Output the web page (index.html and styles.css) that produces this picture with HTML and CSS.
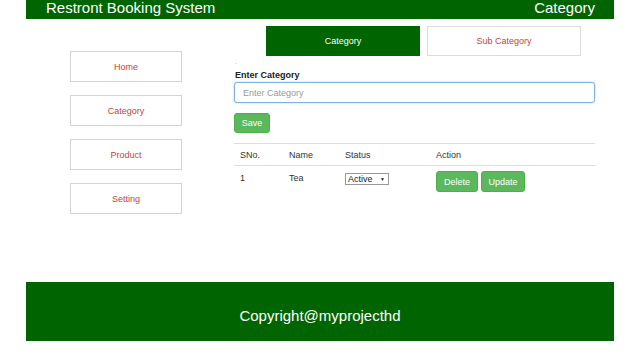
FILE: index.html
```html
<!DOCTYPE html>
<html>
<head>
<meta charset="utf-8">
<link rel="stylesheet" href="styles.css">
</head>
<body>
<div class="page">
  <header class="topbar">
    <span class="brand">Restront Booking System</span>
    <span class="title">Category</span>
  </header>
  <main class="main">
    <nav class="sidebar">
      <a class="navbox">Home</a>
      <a class="navbox">Category</a>
      <a class="navbox">Product</a>
      <a class="navbox">Setting</a>
    </nav>
    <section class="content">
      <div class="tabs">
        <div class="tab tab-active">Category</div>
        <div class="tab">Sub Category</div>
      </div>
      <div class="dash">-</div>
      <label class="label">Enter Category</label>
      <input class="field" type="text" placeholder="Enter Category">
      <button class="btn btn-save">Save</button>
      <table class="grid">
        <thead>
          <tr><th class="c1">SNo.</th><th class="c2">Name</th><th class="c3">Status</th><th>Action</th></tr>
        </thead>
        <tbody>
          <tr>
            <td>1</td>
            <td>Tea</td>
            <td><span class="select">Active <span class="caret">▼</span></span></td>
            <td class="actions"><div class="btnrow"><button class="btn btn-del">Delete</button><button class="btn btn-upd">Update</button></div></td>
          </tr>
        </tbody>
      </table>
    </section>
  </main>
  <footer class="footer">Copyright@myprojecthd</footer>
</div>
</body>
</html>
```
FILE: styles.css
```css
* { box-sizing: border-box; }
body {
  margin: 0;
  background: #fff;
  font-family: "Liberation Sans", Arial, sans-serif;
  color: #333;
}
.page {
  margin: 0 26px;
}
.topbar {
  display: flex;
  justify-content: space-between;
  align-items: flex-start;
  background: #006400;
  color: #fff;
  font-size: 15px;
  line-height: 15px;
  height: 19px;
  padding: 0 19px 0 20px;
}
.main {
  display: flex;
  height: 263px;
}
.sidebar {
  width: 208px;
  padding: 32px 0 0 44px;
  display: flex;
  flex-direction: column;
  gap: 13px;
}
.navbox {
  display: flex;
  align-items: center;
  justify-content: center;
  width: 112px;
  height: 31px;
  border: 1px solid #d4d4d4;
  color: #c2453b;
  font-size: 9px;
}
.content {
  width: 361px;
  padding-top: 7px;
  display: flex;
  flex-direction: column;
  align-items: flex-start;
}
.tabs {
  display: flex;
  gap: 7px;
  margin-left: 32px;
}
.tab {
  width: 154px;
  height: 30px;
  display: flex;
  align-items: center;
  justify-content: center;
  font-size: 9px;
  border: 1px solid #dcdcdc;
  color: #c2453b;
  background: #fff;
}
.tab-active {
  background: #006400;
  border-color: #006400;
  color: #fff;
}
.dash {
  font-size: 6px;
  line-height: 6px;
  color: #bbb;
  margin-top: 4px;
  margin-left: 1px;
}
.label {
  font-size: 9px;
  font-weight: bold;
  line-height: 11px;
  margin-top: 4px;
  margin-left: 1px;
  color: #222;
}
.field {
  margin-top: 1px;
  width: 361px;
  height: 21px;
  border: 1px solid #7fb2e0;
  border-radius: 3px;
  box-shadow: 0 0 2px rgba(102,175,233,0.6);
  padding: 0 8px;
  font-family: "Liberation Sans", Arial, sans-serif;
  font-size: 9px;
  color: #333;
  outline: none;
}
.field::placeholder { color: #999; }
.btn {
  background: #5cb85c;
  border: 1px solid #4cae4c;
  border-radius: 3px;
  color: #fff;
  font-family: "Liberation Sans", Arial, sans-serif;
  font-size: 9px;
  height: 21px;
  padding: 0;
  cursor: pointer;
}
.btn-save {
  margin-top: 10px;
  width: 36px;
  height: 20px;
}
.grid {
  margin-top: 10px;
  width: 361px;
  border-collapse: collapse;
  font-size: 9px;
  color: #333;
}
.grid th {
  font-weight: normal;
  text-align: left;
  height: 22px;
  padding: 0 0 0 6px;
  border-top: 1px solid #ddd;
  border-bottom: 1px solid #ddd;
}
.grid .c1 { width: 49px; }
.grid .c2 { width: 56px; }
.grid .c3 { width: 91px; }
.grid td {
  vertical-align: top;
  padding: 7px 0 0 6px;
  line-height: 11px;
}
.grid td.actions {
  padding: 5px 0 0 6px;
}
.btnrow {
  display: flex;
  gap: 3px;
}
.btn-del { width: 42px; }
.btn-upd { width: 44px; }
.select {
  display: inline-flex;
  align-items: center;
  justify-content: space-between;
  width: 44px;
  height: 12px;
  border: 1px solid #999;
  padding: 0 3px 0 2px;
  font-size: 9px;
  line-height: 10px;
  color: #222;
}
.caret { font-size: 5px; }
.footer {
  background: #006400;
  color: #fff;
  height: 59px;
  display: flex;
  align-items: center;
  justify-content: center;
  padding-top: 7px;
  font-size: 15px;
}
```
